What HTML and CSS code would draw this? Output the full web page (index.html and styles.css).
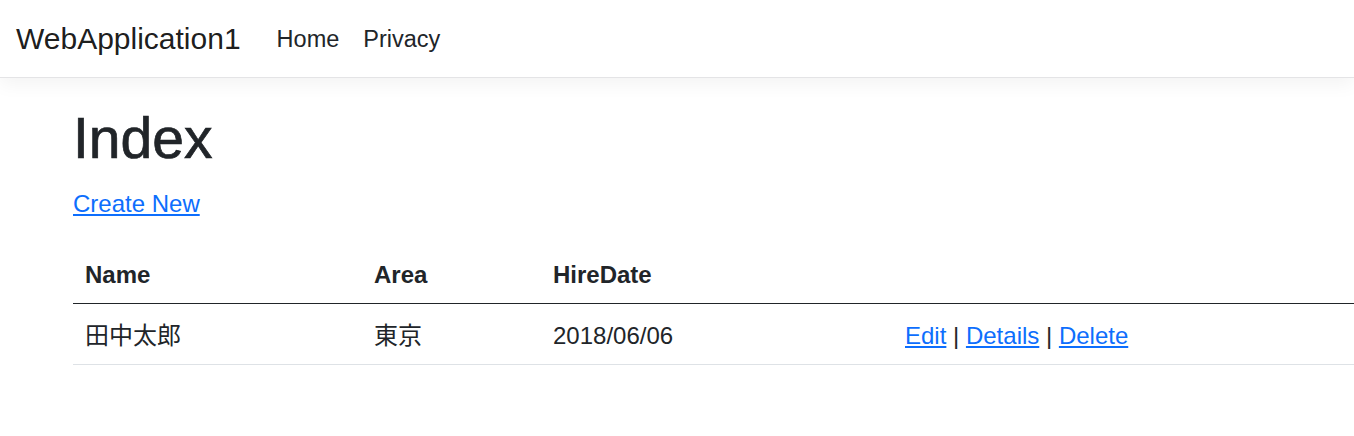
FILE: index.html
```html
<!DOCTYPE html>
<html lang="ja">
<head>
<meta charset="utf-8">
<title>Index - WebApplication1</title>
<link rel="stylesheet" href="styles.css">
</head>
<body>
<header class="navbar">
  <a class="brand" href="#">WebApplication1</a>
  <nav class="nav">
    <a class="nav-link" href="#">Home</a>
    <a class="nav-link" href="#">Privacy</a>
  </nav>
</header>
<main class="container">
  <h1 class="title">Index</h1>
  <p class="create"><a href="#">Create New</a></p>
  <table class="table">
    <thead>
      <tr>
        <th class="c-name">Name</th>
        <th class="c-area">Area</th>
        <th class="c-date">HireDate</th>
        <th></th>
      </tr>
    </thead>
    <tbody>
      <tr>
        <td>田中太郎</td>
        <td>東京</td>
        <td>2018/06/06</td>
        <td><a href="#">Edit</a> | <a href="#">Details</a> | <a href="#">Delete</a></td>
      </tr>
    </tbody>
  </table>
</main>
</body>
</html>
```

FILE: styles.css
```css
* { box-sizing: border-box; }
html, body {
  margin: 0;
  padding: 0;
  overflow: hidden;
}
body {
  font-family: "Segoe UI", "Liberation Sans", "Noto Sans CJK JP", sans-serif;
  font-size: 24px;
  line-height: 1.5;
  color: #212529;
  background: #fff;
}
a { color: #0d6efd; text-decoration: underline; }

.navbar {
  display: flex;
  align-items: center;
  height: 78px;
  padding: 0 16px;
  background: #fff;
  border-bottom: 1px solid #e4e4e6;
  box-shadow: 0 6px 18px rgba(0, 0, 0, 0.05);
  position: relative;
}
.brand {
  font-size: 30px;
  color: rgba(0, 0, 0, 0.9);
  text-decoration: none;
  margin-right: 24px;
  line-height: 45px;
}
.nav { display: flex; }
.nav-link {
  color: #212529;
  text-decoration: none;
  padding: 0 12px;
  line-height: 36px;
  font-size: 23.5px;
}

.container {
  padding: 24px 0 0 73px;
  width: 1500px;
}
.title {
  font-size: 57px;
  font-weight: 500;
  line-height: 72px;
  margin: 0 0 12px;
  -webkit-text-stroke: 0.7px #212529;
}
.create {
  margin: 0 0 21px;
}

.table {
  border-collapse: collapse;
  width: 1400px;
}
.table th, .table td {
  text-align: left;
  vertical-align: top;
  padding: 14px 12px 10px;
  border-bottom: 1px solid #dee2e6;
}
.table th { font-weight: bold; }
.table thead th { border-bottom: 1px solid #212529; }
.c-name { width: 289px; }
.c-area { width: 179px; }
.c-date { width: 352px; }
```
